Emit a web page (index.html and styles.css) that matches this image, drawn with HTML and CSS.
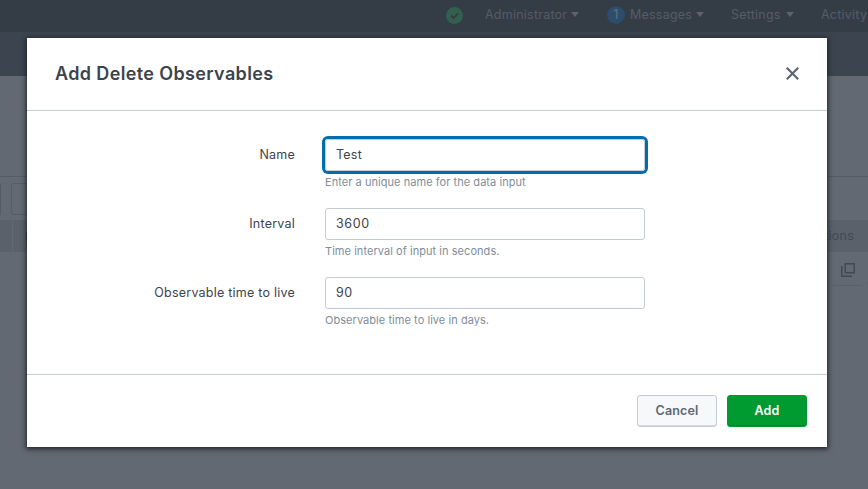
FILE: index.html
```html
<!DOCTYPE html>
<html lang="en">
<head>
<meta charset="utf-8">
<title>Add Delete Observables</title>
<link rel="stylesheet" href="styles.css">
</head>
<body>
<div class="page">
  <header class="topbar">
    <svg class="health" width="17" height="17" viewBox="0 0 17 17"><circle cx="8.500" cy="8.500" r="8.500" fill="#32604f"/><path d="M5 8.500l2.700 2.600 4.300-4.700" fill="none" stroke="#343c46" stroke-width="1.800"/></svg>
    <span class="menu admin">Administrator</span><i class="caret"></i>
    <span class="count">1</span>
    <span class="menu messages">Messages</span><i class="caret"></i>
    <span class="menu settings">Settings</span><i class="caret"></i>
    <span class="menu activity">Activity</span>
  </header>
  <nav class="appbar"></nav>
  <section class="intro"></section>
  <div class="tools"><i class="tool first"></i><i class="tool second"></i></div>
  <div class="thead"><i class="expand"></i><span class="col"></span><span class="actions">Actions</span></div>
  <div class="trow">
    <span class="action"><svg width="14" height="14" viewBox="0 0 14 14" fill="none" stroke="#424953" stroke-width="1.500"><path d="M4.250.75h9v9h-9zM.75 3v10.250H11"/></svg></span>
    <span class="action"></span>
  </div>
</div>
<div class="modal">
  <div class="modal-head">
    <h1 class="title">Add Delete Observables</h1>
    <svg class="close" width="13" height="13" viewBox="0 0 13 13"><path d="M.8.800l11.400 11.400M12.200.800L.8 12.200" stroke="#5c6773" stroke-width="2.200"/></svg>
  </div>
  <form class="modal-body">
    <div class="row">
      <label class="label">Name</label>
      <div class="field"><div class="input focused">Test</div><p class="help">Enter a unique name for the data input</p></div>
    </div>
    <div class="row">
      <label class="label">Interval</label>
      <div class="field"><div class="input"><span class="number">3600</span></div><p class="help">Time interval of input in seconds.</p></div>
    </div>
    <div class="row">
      <label class="label">Observable time to live</label>
      <div class="field"><div class="input"><span class="number">90</span></div><p class="help">Observable time to live in days.</p></div>
    </div>
  </form>
  <div class="modal-foot">
    <button class="btn cancel">Cancel</button>
    <button class="btn add">Add</button>
  </div>
</div>
</body>
</html>
```
FILE: styles.css
```css
* { box-sizing: border-box; }
body { margin: 0; width: 868px; height: 489px; overflow: hidden; position: relative; font: 12.5px/20px Inter, "Liberation Sans", sans-serif; letter-spacing: .23px; color: #3c444d; }
.page { height: 489px; background: #626973; overflow: hidden; }
.topbar { height: 32px; background: #343c46; display: flex; align-items: center; padding: 0 0 3px 446px; color: #555d67; white-space: nowrap; }
.health { flex: none; margin-top: 1px; }
.menu { flex: none; padding-top: 1px; }
.admin { width: 83px; margin-left: 22px; }
.caret { flex: none; border: 4px solid transparent; border-top: 5px solid #5b636d; border-bottom: 0; margin-left: 3px; }
.count { flex: none; width: 18px; height: 18px; border-radius: 50%; background: #2c4d6b; color: #66717d; line-height: 18px; text-align: center; margin-left: 28px; }
.messages { width: 63px; margin-left: 5px; }
.settings { width: 52px; margin-left: 27px; }
.activity { margin-left: 27px; }
.appbar { height: 44px; background: #3c444f; }
.intro { height: 101px; border-bottom: 1px solid #555c66; }
.tools { height: 43px; display: flex; gap: 10px; padding-top: 6px; }
.tool { height: 32px; border: 1px solid #555c66; border-radius: 3px; }
.first { width: 1px; border-width: 0 1px 0 0; }
.second { width: 60px; }
.thead { height: 32px; background: #5a616b; display: flex; align-items: center; color: #424953; }
.expand { width: 13px; height: 32px; border-right: 1px solid #626973; }
.col { width: 8px; height: 9px; margin-left: 13px; background: #343a43; }
.actions { margin: -1px 14px 0 auto; }
.trow { height: 34px; display: flex; justify-content: flex-end; gap: 3px; margin-right: -29px; }
.action { width: 31px; height: 34px; padding-top: 2px; border-bottom: 1px solid #596069; border-radius: 3px; display: flex; align-items: center; justify-content: center; }
.modal { position: absolute; left: 27px; top: 38px; width: 800px; height: 409px; background: #fff; box-shadow: 0 1px 5px 1px #202329; display: flex; flex-direction: column; }
.modal-head { height: 73px; padding: 0 28px; border-bottom: 1px solid #c3cbd4; display: flex; align-items: center; justify-content: space-between; }
.close { margin-top: -1px; }
.title { margin: 0; font-size: 18px; line-height: 24px; font-weight: 600; letter-spacing: .37px; }
.modal-body { height: 263px; padding-top: 28px; display: flex; flex-direction: column; }
.row { height: 69px; display: flex; gap: 30px; }
.label { width: 268px; line-height: 32px; text-align: right; }
.field { width: 320px; }
.input { height: 32px; border: 1px solid #c3cbd4; border-radius: 3px; padding: 0 10px; line-height: 30px; }
.number { letter-spacing: .6px; }
.focused { box-shadow: 0 0 0 3px #006eaa; }
.help { margin: 2px 0 0; font-size: 11px; line-height: 18px; letter-spacing: .05px; color: #818d99; white-space: nowrap; }
.modal-foot { height: 73px; border-top: 1px solid #c3cbd4; padding: 20px 20px 0; display: flex; justify-content: flex-end; gap: 10px; }
.btn { width: 80px; height: 32px; padding: 0; border: 1px solid #c3cbd4; border-radius: 3px; background: #f7f8fa; box-shadow: inset 0 -1px 0 #d5dae0; font: 600 12.5px/28px Inter, "Liberation Sans", sans-serif; letter-spacing: .15px; color: #5c6773; }
.add { background: #009b30; border-color: #009b30; box-shadow: inset 0 -1px 0 #008427; color: #fff; }
```
